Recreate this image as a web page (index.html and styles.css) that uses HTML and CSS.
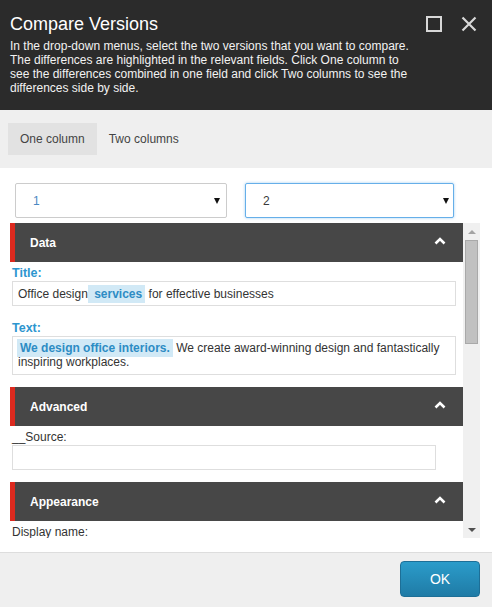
FILE: index.html
```html
<!DOCTYPE html>
<html lang="en">
<head>
<meta charset="utf-8">
<title>Compare Versions</title>
<link rel="stylesheet" href="styles.css">
</head>
<body>
<div class="dialog">
  <header class="hdr">
    <div class="hdr-top">
      <h1 class="hdr-title">Compare Versions</h1>
      <div class="hdr-icons">
        <svg class="hdr-icon" width="16" height="16" viewBox="0 0 16 16"><rect x="1" y="1" width="14" height="14" fill="none" stroke="#d8d8d8" stroke-width="2"/></svg>
        <svg class="hdr-icon" width="16" height="16" viewBox="0 0 16 16"><path d="M1.5 1.5 L14.5 14.5 M14.5 1.5 L1.5 14.5" fill="none" stroke="#d8d8d8" stroke-width="2.2"/></svg>
      </div>
    </div>
    <p class="desc">In the drop-down menus, select the two versions that you want to compare.<br>The differences are highlighted in the relevant fields. Click One column to<br>see the differences combined in one field and click Two columns to see the<br>differences side by side.</p>
  </header>

  <nav class="tabs">
    <span class="tab tab-active">One column</span>
    <span class="tab">Two columns</span>
  </nav>

  <main class="body">
    <div class="selects">
      <div class="sel sel-a"><span class="sel-val sel-val-a">1</span><i class="caret"></i></div>
      <div class="sel sel-b"><span class="sel-val">2</span><i class="caret"></i></div>
    </div>

    <div class="scroll">
      <div class="scroll-content">
        <section class="sec">
          <div class="sec-head"><span>Data</span>
            <svg class="chev" width="12" height="8" viewBox="0 0 12 8"><path d="M1.5 6.5 L6 2 L10.5 6.5" fill="none" stroke="#fff" stroke-width="2.6"/></svg>
          </div>
          <div class="field">
            <div class="lbl lbl-diff">Title:</div>
            <div class="box">Office design<span class="ins"> services</span> for effective businesses</div>
          </div>
          <div class="field">
            <div class="lbl lbl-diff">Text:</div>
            <div class="box box-multi"><span class="ins ins-first">We design office interiors.</span> We create award-winning design and fantastically inspiring workplaces.</div>
          </div>
        </section>

        <section class="sec">
          <div class="sec-head"><span>Advanced</span>
            <svg class="chev" width="12" height="8" viewBox="0 0 12 8"><path d="M1.5 6.5 L6 2 L10.5 6.5" fill="none" stroke="#fff" stroke-width="2.6"/></svg>
          </div>
          <div class="field">
            <div class="lbl">__Source:</div>
            <div class="box box-narrow"></div>
          </div>
        </section>

        <section class="sec">
          <div class="sec-head"><span>Appearance</span>
            <svg class="chev" width="12" height="8" viewBox="0 0 12 8"><path d="M1.5 6.5 L6 2 L10.5 6.5" fill="none" stroke="#fff" stroke-width="2.6"/></svg>
          </div>
          <div class="field">
            <div class="lbl">Display name:</div>
            <div class="box box-narrow"></div>
          </div>
        </section>
      </div>
      <div class="sbar">
        <div class="sb-btn"><i class="sb-up"></i></div>
        <div class="sb-track"><div class="sb-thumb"></div></div>
        <div class="sb-btn"><i class="sb-down"></i></div>
      </div>
    </div>
  </main>

  <footer class="foot">
    <button class="ok">OK</button>
  </footer>
</div>
</body>
</html>
```

FILE: styles.css
```css
* { box-sizing: border-box; }

html, body {
  margin: 0;
  padding: 0;
  background: #ffffff;
}

body {
  font-family: "Liberation Sans", Arial, sans-serif;
  font-size: 12px;
  color: #333333;
}

.dialog {
  width: 492px;
  height: 607px;
  display: flex;
  flex-direction: column;
  overflow: hidden;
}

/* Header */
.hdr {
  height: 110px;
  background: #2b2b2b;
  padding: 13px 15px 0 10px;
  color: #ffffff;
}

.hdr-top {
  display: flex;
  align-items: center;
  justify-content: space-between;
  height: 22px;
}

.hdr-title {
  margin: 0;
  font-size: 18px;
  font-weight: normal;
  line-height: 22px;
  color: #ffffff;
}

.hdr-icons {
  display: flex;
  gap: 19px;
  align-items: center;
  margin-top: 0;
}

.hdr-icon { display: block; }

.desc {
  margin: 4px 0 0 0;
  font-size: 12px;
  line-height: 14px;
  color: #f2f2f2;
  white-space: nowrap;
}

/* Tabs */
.tabs {
  height: 58px;
  background: #efefef;
  padding: 13px 8px;
  display: flex;
}

.tab {
  height: 32px;
  line-height: 32px;
  padding: 0 12px;
  color: #444444;
  font-size: 12px;
}

.tab-active {
  background: #e2e2e2;
}

/* Body */
.body {
  height: 385px;
  background: #ffffff;
  padding-top: 15px;
  border-bottom: 1px solid #dddddd;
}

.selects {
  display: grid;
  grid-template-columns: 212px 209px;
  column-gap: 18px;
  padding-left: 15px;
  height: 35px;
}

.sel {
  height: 35px;
  border: 1px solid #cccccc;
  border-radius: 2px;
  display: flex;
  align-items: center;
  justify-content: space-between;
  padding: 0 6px 0 17px;
  background: #ffffff;
}

.sel-b {
  border-color: #66afe9;
  box-shadow: 0 0 3px rgba(102, 175, 233, 0.6);
  padding-right: 4px;
}

.sel-val {
  font-size: 12px;
  color: #3a3a3a;
}

.sel-val-a { color: #4a88c2; }

.caret {
  display: block;
  width: 0;
  height: 0;
  border-left: 3.5px solid transparent;
  border-right: 3.5px solid transparent;
  border-top: 6px solid #111111;
}

/* Scroll area */
.scroll {
  margin: 5px 12px 0 10px;
  height: 315px;
  display: flex;
}

.scroll-content {
  flex: 1;
  overflow: hidden;
}

.sec { margin-bottom: 12px; }

.sec-head {
  height: 39px;
  background: #474747;
  border-left: 5px solid #dc2a1f;
  padding: 0 17px 0 15px;
  display: flex;
  align-items: center;
  justify-content: space-between;
  color: #ffffff;
  font-weight: bold;
  font-size: 12px;
}

.chev { display: block; margin-top: -3px; }

.field { padding-left: 2px; }

.field + .field .lbl { margin-top: 15px; }

.lbl {
  margin-top: 4px;
  line-height: 14px;
  font-size: 12px;
  color: #333333;
}

.lbl-diff {
  color: #2d96cf;
  font-weight: bold;
  font-size: 12.5px;
}

.box {
  margin-top: 1px;
  width: 444px;
  min-height: 25px;
  border: 1px solid #dedede;
  padding: 5px 5px 4px 5px;
  line-height: 14px;
  font-size: 12px;
  color: #333333;
}

.box-multi {
  padding: 4px 5px 5px 5px;
}

.box-narrow { width: 424px; }

.ins {
  background: #d1e9f6;
  color: #2d8cc4;
  font-weight: bold;
  padding: 2px 3px;
}

.ins-first { margin-left: -1px; }

/* Fake scrollbar */
.sbar {
  width: 17px;
  background: #f0f0f0;
  display: flex;
  flex-direction: column;
}

.sb-btn {
  height: 17px;
  display: flex;
  align-items: center;
  justify-content: center;
}

.sb-up {
  width: 0;
  height: 0;
  border-left: 4px solid transparent;
  border-right: 4px solid transparent;
  border-bottom: 4px solid #a3a3a3;
}

.sb-down {
  width: 0;
  height: 0;
  border-left: 4px solid transparent;
  border-right: 4px solid transparent;
  border-top: 4px solid #505050;
}

.sb-track {
  flex: 1;
  padding: 0 2px;
}

.sb-thumb {
  height: 104px;
  background: #c1c1c1;
  border: 1px solid #a9a9a9;
}

/* Footer */
.foot {
  flex: 1;
  background: #efefef;
  display: flex;
  justify-content: flex-end;
  align-items: flex-start;
  padding: 8px 12px 0 0;
}

.ok {
  width: 80px;
  height: 36px;
  border: 1px solid #1d6f97;
  border-radius: 4px;
  background: linear-gradient(#2b9cca, #1f7ba6);
  color: #ffffff;
  font-family: "Liberation Sans", Arial, sans-serif;
  font-size: 14px;
  padding: 0;
}
```
